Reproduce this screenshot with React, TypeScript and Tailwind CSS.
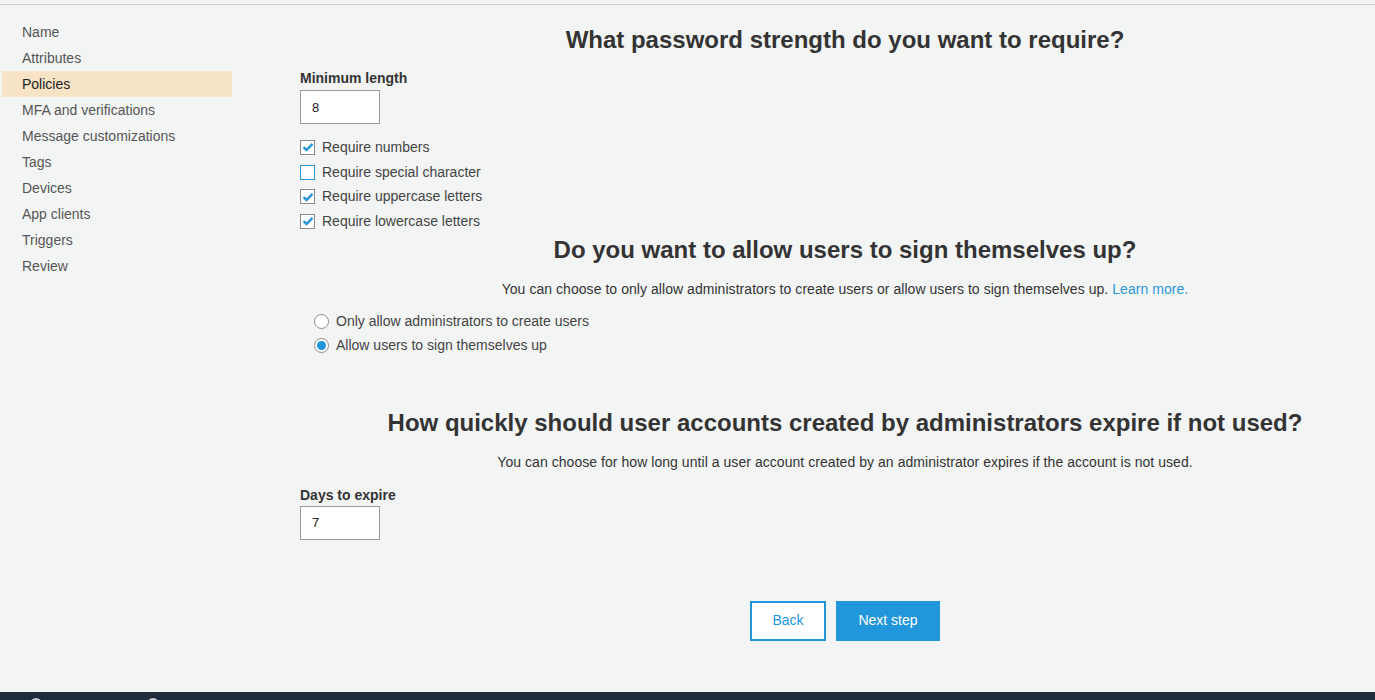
import React from 'react';

const navItems = [
  'Name',
  'Attributes',
  'Policies',
  'MFA and verifications',
  'Message customizations',
  'Tags',
  'Devices',
  'App clients',
  'Triggers',
  'Review',
];

const Checkbox: React.FC<{ checked: boolean; label: string }> = ({ checked, label }) => (
  <label className="flex items-center h-[24.7px] gap-[7px] text-[14px] text-[#444]">
    <span
      className={`w-[15px] h-[15px] bg-white border flex items-center justify-center ${
        checked ? 'border-[#8a8a8a]' : 'border-[#2b95d6]'
      }`}
    >
      {checked && (
        <svg width="12" height="10" viewBox="0 0 12 10">
          <path d="M1.5 5.2 L4.5 8 L10.5 1.8" fill="none" stroke="#2b95d6" strokeWidth="2.4" />
        </svg>
      )}
    </span>
    {label}
  </label>
);

const Radio: React.FC<{ checked: boolean; label: string }> = ({ checked, label }) => (
  <label className="flex items-center h-[24px] gap-[7px] text-[14px] text-[#444]">
    <span className="w-[15px] h-[15px] rounded-full bg-white border border-[#8a8a8a] flex items-center justify-center">
      {checked && <span className="w-[9px] h-[9px] rounded-full bg-[#2196da]" />}
    </span>
    {label}
  </label>
);

const App: React.FC = () => {
  return (
    <div className="h-[700px] overflow-hidden flex flex-col bg-[#f3f5f5] font-['Liberation_Sans',Arial,sans-serif]">
      {/* top rule */}
      <div className="h-[5px] border-b border-[#cfd1d1]" />

      <div className="flex flex-1">
        {/* Sidebar */}
        <nav className="w-[232px] pl-[2px] pt-[14px] shrink-0">
          {navItems.map((item) => (
            <div
              key={item}
              className={`h-[26px] flex items-center pl-[20px] text-[14px] ${
                item === 'Policies' ? 'bg-[#f7e3c6] text-[#222]' : 'text-[#555]'
              }`}
            >
              {item}
            </div>
          ))}
        </nav>

        {/* Main */}
        <main className="flex-1 pl-[68px] pt-[21px] text-[#333]">
          <h2 className="pl-[15px] text-center text-[24px] leading-[28px] font-bold">
            What password strength do you want to require?
          </h2>

          <div className="mt-[16px] text-[14px] leading-[16px] font-bold">Minimum length</div>
          <input
            defaultValue="8"
            className="mt-[4px] w-[80px] h-[34px] bg-white border border-[#999] px-[11px] text-[13px] text-[#222] outline-none"
          />

          <div className="mt-[11px] flex flex-col">
            <Checkbox checked label="Require numbers" />
            <Checkbox checked={false} label="Require special character" />
            <Checkbox checked label="Require uppercase letters" />
            <Checkbox checked label="Require lowercase letters" />
          </div>

          <h2 className="mt-[2px] pl-[15px] text-center text-[24px] leading-[28px] font-bold">
            Do you want to allow users to sign themselves up?
          </h2>
          <p className="mt-[15px] pl-[15px] text-center text-[14px] leading-[20px] tracking-[0.05px] text-[#333]">
            You can choose to only allow administrators to create users or allow users to sign themselves up.{' '}
            <a className="text-[#2b95d6]">Learn more.</a>
          </p>

          <div className="mt-[11px] pl-[14px] flex flex-col">
            <Radio checked={false} label="Only allow administrators to create users" />
            <Radio checked label="Allow users to sign themselves up" />
          </div>

          <h2 className="mt-[51px] pl-[15px] text-center text-[24px] leading-[28px] font-bold">
            How quickly should user accounts created by administrators expire if not used?
          </h2>
          <p className="mt-[15px] pl-[15px] text-center text-[14px] leading-[20px] tracking-[0.05px] text-[#333]">
            You can choose for how long until a user account created by an administrator expires if the account is not used.
          </p>

          <div className="mt-[15px] text-[14px] leading-[16px] font-bold">Days to expire</div>
          <input
            defaultValue="7"
            className="mt-[3px] w-[80px] h-[34px] bg-white border border-[#999] px-[11px] text-[13px] text-[#222] outline-none"
          />

          <div className="mt-[61px] pl-[15px] flex justify-center gap-[10px]">
            <button className="w-[76px] h-[40px] bg-white border-2 border-[#2196da] text-[#2196da] text-[14px]">
              Back
            </button>
            <button className="w-[104px] h-[40px] bg-[#2196da] text-white text-[14px]">Next step</button>
          </div>
        </main>
      </div>

      {/* footer bar */}
      <footer className="h-[8px] shrink-0 bg-[#1f2c3d] flex items-start gap-[105px] pl-[30px] pt-[6px] overflow-hidden">
        <span className="w-[12px] h-[12px] rounded-full bg-[#c8ccd2]" />
        <span className="w-[12px] h-[12px] rounded-full bg-[#c8ccd2]" />
      </footer>
    </div>
  );
};

export default App;
